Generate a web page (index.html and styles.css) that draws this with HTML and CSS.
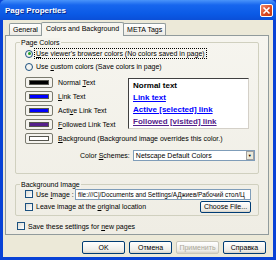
FILE: index.html
```html
<!DOCTYPE html>
<html lang="en">
<head>
    <meta charset="UTF-8">
    <title>Page Properties</title>
    <link rel="stylesheet" href="styles.css">
</head>
<body>
    <div class="window">
        <div class="titlebar">
            <span class="title">Page Properties</span>
            <span class="close">
                <svg width="9" height="9" viewBox="0 0 9 9"><path d="M1.5 1.5L7.5 7.5M7.5 1.5L1.5 7.5" stroke="#fff" stroke-width="1.6"/></svg>
            </span>
        </div>

        <div class="client">
            <div class="tabs">
                <span class="tab">General</span>
                <span class="tab active">Colors and Background</span>
                <span class="tab">META Tags</span>
            </div>

            <div class="panel">
                <!-- Page Colors -->
                <div class="group colors">
                    <span class="legend">Page Colors</span>
                    <div class="opt"><span class="radio on"></span><span class="focus"><u>U</u>se viewer's browser colors (No colors saved in page)</span></div>
                    <div class="opt"><span class="radio"></span><span>Use <u>c</u>ustom colors (Save colors in page)</span></div>

                    <div class="swatch-area">
                        <div class="swatches">
                            <div class="sw-row"><span class="swatch"><i style="background:#000"></i></span><span>Normal <u>T</u>ext</span></div>
                            <div class="sw-row"><span class="swatch"><i style="background:#0000ff"></i></span><span><u>L</u>ink Text</span></div>
                            <div class="sw-row"><span class="swatch"><i style="background:#0000ff"></i></span><span>Acti<u>v</u>e Link Text</span></div>
                            <div class="sw-row"><span class="swatch"><i style="background:#55208b"></i></span><span><u>F</u>ollowed Link Text</span></div>
                        </div>
                        <div class="preview">
                            <div class="pv normal">Normal text</div>
                            <div class="pv link">Link text</div>
                            <div class="pv link">Active [selected] link</div>
                            <div class="pv visited">Followed [visited] link</div>
                        </div>
                    </div>
                    <div class="sw-row"><span class="swatch"><i style="background:#fff"></i></span><span><u>B</u>ackground (Background image overrides this color.)</span></div>

                    <div class="scheme">
                        <span>Color <u>S</u>chemes:</span>
                        <span class="select">Netscape Default Colors<span class="arrow">&#9660;</span></span>
                    </div>
                </div>

                <!-- Background Image -->
                <div class="group bgimage">
                    <span class="legend">Background Image</span>
                    <div class="img-row">
                        <span class="check"></span><span class="img-label">Use <u>I</u>mage :</span>
                        <span class="field">file:///C|/Documents and Settings/АДжиев/Рабочий стол/Ц</span>
                    </div>
                    <div class="img-row tall">
                        <span class="check"></span><span class="grow">Leave image at the <u>o</u>riginal location</span>
                        <span class="btn small">Choose File...</span>
                    </div>
                </div>

                <div class="save"><span class="check"></span><span>Save these settings for <u>n</u>ew pages</span></div>
            </div>

            <div class="buttons">
                <span class="btn">OK</span>
                <span class="btn">Отмена</span>
                <span class="btn disabled">Применить</span>
                <span class="btn">Справка</span>
            </div>
        </div>
    </div>
</body>
</html>
```

FILE: styles.css
```css
body {
    margin: 0;
    font-family: "Liberation Sans", Arial, sans-serif;
    font-size: 7px;
    color: #000;
}

.window {
    width: 276px;
    height: 260px;
    box-sizing: border-box;
    background: #0842d6;
    padding: 0 3px 3px 3px;
    display: flex;
    flex-direction: column;
}

.titlebar {
    height: 20px;
    flex: none;
    margin: 0 -3px;
    padding: 0 3px 0 5px;
    display: flex;
    align-items: center;
    justify-content: space-between;
    background: linear-gradient(#4a94fa, #1766ee 25%, #0a5ae6 70%, #0a4fd8);
    border-radius: 5px 5px 0 0;
}

.title {
    color: #fff;
    font-weight: bold;
    font-size: 8px;
    text-shadow: 1px 1px 0 #0a2a8a;
}

.close {
    width: 13px;
    height: 13px;
    border: 1px solid #fff;
    border-radius: 2px;
    background: linear-gradient(135deg, #f08a6c, #d8461f 60%, #c23a12);
    display: flex;
    align-items: center;
    justify-content: center;
    box-sizing: border-box;
}

.client {
    flex: 1;
    background: #ece9d8;
    padding: 2px 4px 0 2px;
    display: flex;
    flex-direction: column;
}

.tabs {
    display: flex;
    padding-left: 4px;
    height: 13px;
    align-items: flex-end;
}

.tab {
    height: 12px;
    line-height: 11px;
    padding: 0 3px;
    border: 1px solid #919b9c;
    border-bottom: none;
    background: linear-gradient(#fff, #ecebe5);
    margin-right: -1px;
    border-radius: 2px 2px 0 0;
    box-sizing: border-box;
}

.tab.active {
    height: 14px;
    line-height: 12px;
    background: #f6f5ef;
    position: relative;
    z-index: 1;
    margin-bottom: -1px;
    padding: 0 4px;
}

.panel {
    height: 200px;
    box-sizing: border-box;
    border: 1px solid #919b9c;
    background: linear-gradient(#f6f5ef, #efede4);
    padding: 6px 9px 0 9px;
    display: flex;
    flex-direction: column;
}

.group {
    position: relative;
    border: 1px solid #d0d0bf;
    border-radius: 2px;
    padding: 4px 0 0 9px;
}

.legend {
    position: absolute;
    top: -5px;
    left: 4px;
    padding: 0 1px;
    background: #f4f3ec;
    line-height: 9px;
}

.opt {
    display: flex;
    align-items: center;
    height: 13px;
    gap: 3px;
}

.radio {
    width: 6px;
    height: 6px;
    border: 1px solid #1c5180;
    border-radius: 50%;
    background: #f4f4f0;
    position: relative;
    flex: none;
}

.radio.on::after {
    content: "";
    position: absolute;
    left: 1.5px;
    top: 1.5px;
    width: 3px;
    height: 3px;
    border-radius: 50%;
    background: #21a121;
}

.focus {
    outline: 1px dotted #000;
    outline-offset: 1px;
}

.swatch-area {
    display: flex;
    margin-top: 2px;
}

.swatches {
    width: 103px;
}

.sw-row {
    display: flex;
    align-items: center;
    height: 14px;
    gap: 5px;
    white-space: nowrap;
}

.swatch {
    width: 28px;
    height: 11px;
    box-sizing: border-box;
    border: 1px solid #7a7a6e;
    border-radius: 2px;
    background: #f4f3ee;
    padding: 2px 3px;
    flex: none;
}

.swatch i {
    display: block;
    height: 100%;
    border: 1px solid #55554d;
    box-sizing: border-box;
}

.preview {
    width: 121px;
    height: 51px;
    margin-top: 3px;
    box-sizing: border-box;
    background: #fff;
    border: 1px solid;
    border-color: #404040 #d4d0c8 #d4d0c8 #404040;
    padding: 1px 4px;
    font-weight: bold;
    font-size: 8px;
}

.pv {
    height: 12px;
    line-height: 12px;
    white-space: nowrap;
}

.pv.link {
    color: #0000ff;
    text-decoration: underline;
}

.pv.visited {
    color: #55208b;
    text-decoration: underline;
}

.scheme {
    display: flex;
    align-items: center;
    gap: 3px;
    margin: 5px 0 12px 55px;
}

.select {
    width: 122px;
    height: 11px;
    box-sizing: border-box;
    border: 1px solid #7f9db9;
    background: #fff;
    display: flex;
    align-items: center;
    justify-content: space-between;
    padding-left: 2px;
}

.arrow {
    width: 8px;
    height: 9px;
    background: #ece9d8;
    border: 1px solid #a0a0a0;
    box-sizing: border-box;
    font-size: 4px;
    line-height: 7px;
    text-align: center;
}

.bgimage {
    margin-top: 10px;
    padding-top: 3px;
    padding-right: 7px;
    padding-bottom: 2px;
}

.img-row {
    display: flex;
    align-items: center;
    height: 12px;
    gap: 3px;
    white-space: nowrap;
}

.img-row.tall {
    height: 13px;
}

.check {
    width: 6px;
    height: 6px;
    border: 1px solid #1c5180;
    background: linear-gradient(135deg, #dcdcd6, #fff);
    flex: none;
}

.img-label {
    width: 36px;
}

.field {
    flex: 1;
    min-width: 0;
    height: 11px;
    line-height: 9px;
    box-sizing: border-box;
    border: 1px solid #7f9db9;
    background: #fff;
    padding-left: 2px;
    font-size: 6.4px;
    overflow: hidden;
}

.grow {
    flex: 1;
}

.btn {
    box-sizing: border-box;
    border: 1px solid #003c74;
    border-radius: 2px;
    background: linear-gradient(#fff, #ecebe6 80%, #d6d0c5);
    text-align: center;
    white-space: nowrap;
}

.btn.small {
    width: 51px;
    height: 12px;
    line-height: 10px;
}

.save {
    display: flex;
    align-items: center;
    gap: 3px;
    height: 12px;
    margin-top: 4px;
    padding-left: 2px;
}

.buttons {
    display: flex;
    justify-content: flex-end;
    gap: 4px;
    padding-top: 6px;
    padding-right: 3px;
}

.btn.disabled {
    color: #aca899;
    border-color: #c9c7ba;
}

.buttons .btn {
    width: 43px;
    height: 13px;
    line-height: 11px;
}
```
